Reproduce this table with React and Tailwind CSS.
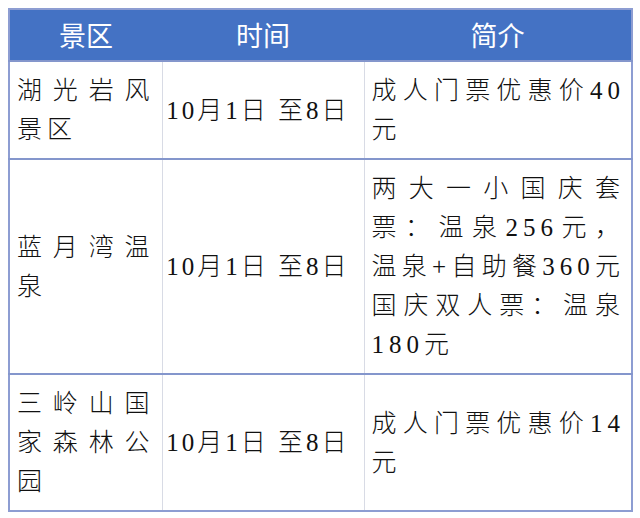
import React from "react";

const rows = [
  { name: "湖光岩风景区", date: "10月1日 至8日", info: "成人门票优惠价40元" },
  {
    name: "蓝月湾温泉",
    date: "10月1日 至8日",
    info: "两大一小国庆套票：温泉256元，温泉+自助餐360元国庆双人票：温泉180元",
  },
  { name: "三岭山国家森林公园", date: "10月1日 至8日", info: "成人门票优惠价14元" },
];

const body = "font-['Liberation_Serif','Noto_Sans_CJK_SC',serif] font-light";

export default function App() {
  return (
    <div className="w-[640px] h-[518px] bg-white pt-[8px] pl-[8px]">
      <table className="w-[623px] border-collapse table-fixed border-2 border-[#8d9dd2] text-[#111]">
        <colgroup>
          <col className="w-[153px]" />
          <col className="w-[202px]" />
          <col className="w-[268px]" />
        </colgroup>
        <thead>
          <tr className="h-[52px] bg-[#4472c4] text-white text-[27px]">
            <th className="font-normal font-['Noto_Sans_CJK_SC',sans-serif]">景区</th>
            <th className="font-normal font-['Noto_Sans_CJK_SC',sans-serif]">时间</th>
            <th className="font-normal font-['Noto_Sans_CJK_SC',sans-serif]">简介</th>
          </tr>
        </thead>
        <tbody>
          {rows.map((r) => (
            <tr key={r.name} className="border-t-2 border-[#8496cc] text-[25px] leading-[39px]">
              <td className={`${body} border-r border-[#d8dbe5] px-[7px] py-[9px] text-justify tracking-[5px] align-middle`}>
                {r.name}
              </td>
              <td className={`${body} border-r border-[#d8dbe5] pl-0 pr-[10px] text-center tracking-[3px] align-middle whitespace-nowrap`}>
                {r.date}
              </td>
              <td className={`${body} pl-[7px] pr-[6px] py-[9px] text-justify tracking-[5px] align-middle`}>
                {r.info}
              </td>
            </tr>
          ))}
        </tbody>
      </table>
    </div>
  );
}
